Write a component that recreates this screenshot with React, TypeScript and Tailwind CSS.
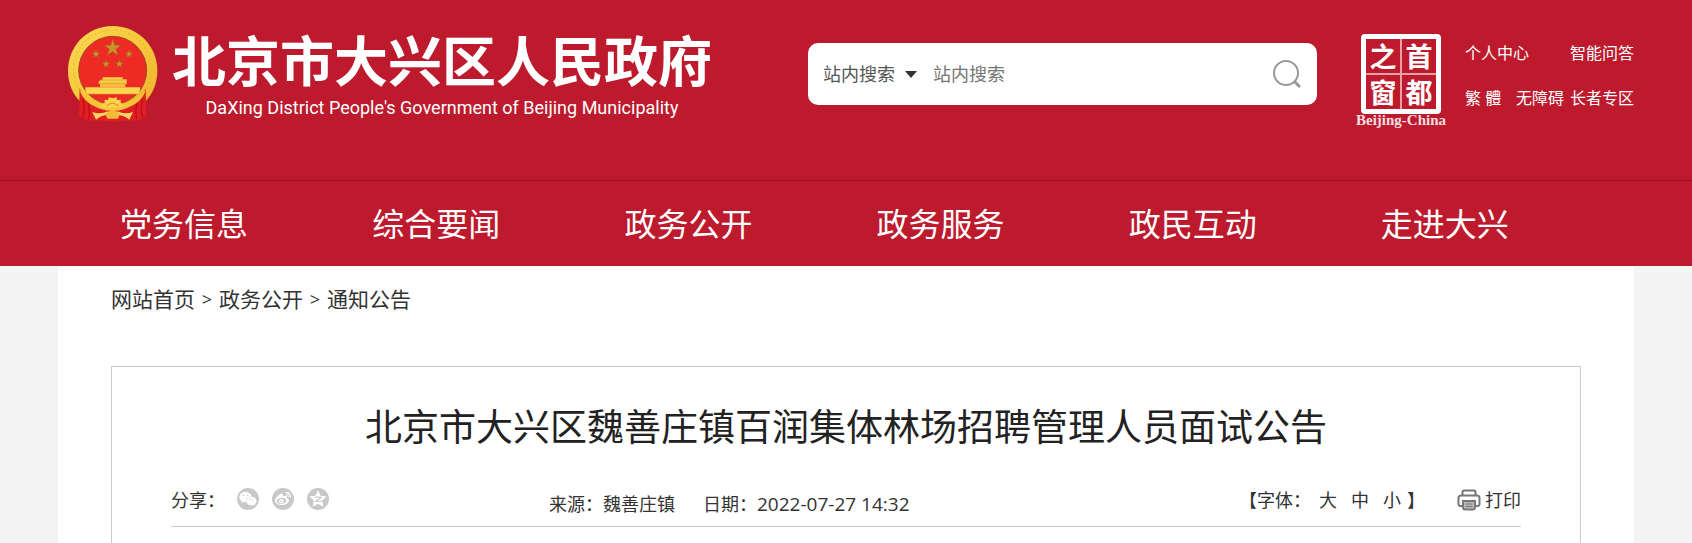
import { useState } from "react";
import { FaWeibo, FaWeixin } from "react-icons/fa6";

const navItems = ["党务信息", "综合要闻", "政务公开", "政务服务", "政民互动", "走进大兴"];
const crumbs = ["网站首页", "政务公开", "通知公告"];
const fontSizes = ["大", "中", "小"];

function Star({ x, y, r }: { x: number; y: number; r: number }) {
  const points = Array.from({ length: 10 }, (_, i) => {
    const radius = i % 2 === 0 ? r : r * 0.38;
    const angle = (Math.PI / 5) * i - Math.PI / 2;
    return `${(x + radius * Math.cos(angle)).toFixed(1)},${(y + radius * Math.sin(angle)).toFixed(1)}`;
  }).join(" ");

  return <polygon points={points} fill="#c9952a" stroke="#a5621d" strokeWidth="1.5" />;
}

function Emblem() {
  return (
    <svg viewBox="24 18 270 288" className="h-24 w-[90px] shrink-0" aria-hidden="true">
      <defs>
        <linearGradient id="gold" x1="0" y1="0" x2="1" y2="1">
          <stop offset="0" stopColor="#f8d955" />
          <stop offset="0.5" stopColor="#f7c93a" />
          <stop offset="1" stopColor="#eeb02e" />
        </linearGradient>
      </defs>
      {/* wheat ring */}
      <path
        d="M158 18 C234 18 292 78 292 152 C292 190 278 222 256 244 C228 268 190 274 158 274 C126 274 88 268 60 244 C38 222 24 190 24 152 C24 78 82 18 158 18 Z"
        fill="url(#gold)"
      />
      <circle cx="158" cy="147" r="117" fill="none" stroke="#e9b235" strokeWidth="5" strokeDasharray="7 6" opacity="0.5" />
      {/* drapery */}
      <path
        d="M59 204 Q72 246 120 262 Q140 269 158 269 Q176 269 196 262 Q244 246 257 204 L259 286 Q242 306 208 301 L158 305 L108 301 Q74 306 57 286 Z"
        fill="#df1f22"
      />
      <path
        d="M68 236 Q76 262 68 292 M84 250 Q92 272 86 298 M248 236 Q240 262 248 292 M232 250 Q224 272 230 298"
        fill="none"
        stroke="#b90f1c"
        strokeWidth="4"
      />
      <circle cx="158" cy="151" r="102" fill="#ee2a24" stroke="#9d4c20" strokeWidth="3" />
      <Star x={158} y={84} r={27} />
      <Star x={108} y={102} r={13} />
      <Star x={207} y={102} r={13} />
      <Star x={138} y={132} r={13} />
      <Star x={178} y={132} r={13} />
      {/* gate tower */}
      <path d="M128 172 H188 V178 H200 V192 H116 V184 L128 178 Z" fill="#f9cf48" />
      <path d="M122 180 H194 M118 190 H198" stroke="#d98f28" strokeWidth="2" />
      <path d="M120 192 H196 V201 H120 Z" fill="#f5bd3c" />
      <path d="M76 202 H240 V210 L235 222 H82 L76 210 Z" fill="#fbd650" />
      <path d="M82 222 H235" stroke="#e0a12e" strokeWidth="2" />
      {/* cog wheel and sheaves */}
      <path d="M58 208 Q92 254 158 258 Q224 254 258 208 Q246 250 196 266 Q158 280 120 266 Q70 250 58 208 Z" fill="#f5c238" />
      <path d="M122 256 L134 248 L134 239 L144 240 L147 232 L158 235 L169 232 L172 240 L182 239 L182 248 L194 256 L180 263 H136 Z" fill="#f9d24a" />
      <path d="M140 258 Q158 242 176 258" fill="none" stroke="#d2862a" strokeWidth="3" />
      <path d="M97 276 Q120 284 144 274 L147 284 Q122 286 108 299 Z" fill="#f9d662" />
      <path d="M219 276 Q196 284 172 274 L169 284 Q194 286 208 299 Z" fill="#f9d662" />
      <path d="M136 282 Q158 260 180 282 L174 296 H142 Z" fill="#f4bb38" />
    </svg>
  );
}

function Seal() {
  return (
    <a href="#" className="flex w-[88px] shrink-0 flex-col items-center text-white">
      <span className="grid size-20 grid-cols-2 grid-rows-2 gap-0.5 rounded-[4px] border-[5px] border-white bg-[#e9a0a7] text-[27px] leading-none font-bold">
        {["之", "首", "窗", "都"].map((char) => (
          <span key={char} className="flex items-center justify-center bg-[#bd1a2d]">
            {char}
          </span>
        ))}
      </span>
      <span className="font-['Liberation_Serif',serif] text-[15px] leading-3 font-bold whitespace-nowrap text-[#f6dfe1]">
        Beijing-China
      </span>
    </a>
  );
}

function QzoneIcon() {
  return (
    <svg viewBox="0 0 22 22" className="size-[22px]" aria-hidden="true">
      <path
        d="M11 3.2 L13.3 8.2 L18.7 8.8 L14.7 12.5 L15.8 18 L11 15.2 L6.2 18 L7.3 12.5 L3.3 8.8 L8.7 8.2 Z"
        fill="#fff"
        stroke="#fff"
        strokeLinejoin="round"
      />
      <path d="M8 9.4 Q11 8.6 14 9.4 L8.8 13.2 Q12 14 15.6 12.8" fill="none" stroke="#c8c8c8" strokeWidth="1.2" />
    </svg>
  );
}

function PrinterIcon() {
  return (
    <svg viewBox="0 0 24 22" className="h-[22px] w-6" fill="none" stroke="#777" aria-hidden="true">
      <path d="M5.5 6 V3 Q5.5 1.5 7 1.5 H17 Q18.5 1.5 18.5 3 V6" strokeWidth="2" />
      <path
        d="M5 17 H3.5 Q1.5 17 1.5 15 V9 Q1.5 6.5 4 6.5 H20 Q22.5 6.5 22.5 9 V15 Q22.5 17 20.5 17 H19"
        strokeWidth="2"
      />
      <path d="M6 12 H18 V18 Q18 20.5 16 20.5 H8 Q6 20.5 6 18 Z" fill="#bbb" strokeWidth="2" />
      <path d="M8.5 15 H15.5 M8.5 17.5 H15.5" strokeWidth="1" />
    </svg>
  );
}

export default function App() {
  const [keyword, setKeyword] = useState("");
  const [scope, setScope] = useState("site");

  return (
    <div className="min-h-screen bg-[#f4f4f4] font-['Open_Sans','Noto_Sans_CJK_SC',sans-serif] text-[#333]">
      <header className="bg-[#bd1a2d] text-white">
        <div className="mx-auto flex h-45 max-w-[1576px] items-start">
          <a href="#" className="flex shrink-0 gap-3.5 pt-[26px] pl-2.5">
            <Emblem />
            <span className="flex flex-col items-center">
              <span className="text-[54px] leading-[70px] font-bold">北京市大兴区人民政府</span>
              <span className="font-[Roboto,sans-serif] text-[18px] leading-6">
                DaXing District People's Government of Beijing Municipality
              </span>
            </span>
          </a>

          <form
            className="mt-[43px] ml-24 flex h-[62px] flex-1 items-center rounded-[10px] bg-white pr-4 pl-[15px] text-[18px]"
            onSubmit={(e) => e.preventDefault()}
          >
            <label className="flex shrink-0 items-center gap-2">
              <select
                aria-label="搜索范围"
                value={scope}
                onChange={(e) => setScope(e.target.value)}
                className="w-[74px] appearance-none text-[#555] outline-none"
              >
                <option value="site">站内搜索</option>
              </select>
              <svg viewBox="0 0 12 7" className="h-[7px] w-3" aria-hidden="true">
                <path d="M0 0 H12 L6 7 Z" fill="#333" />
              </svg>
            </label>
            <input
              type="text"
              aria-label="站内搜索"
              placeholder="站内搜索"
              value={keyword}
              onChange={(e) => setKeyword(e.target.value)}
              className="ml-4 min-w-0 flex-1 text-[#333] outline-none placeholder:text-[#757575]"
            />
            <button type="submit" aria-label="搜索">
              <svg viewBox="0 0 28 28" className="size-7" fill="none" stroke="#999" strokeWidth="2" aria-hidden="true">
                <circle cx="13" cy="13" r="12" />
                <path d="M21.5 21.5 L27 27" strokeWidth="3" />
              </svg>
            </button>
          </form>

          <div className="mt-[34px] ml-10">
            <Seal />
          </div>

          <div className="mt-[41px] ml-5 grid w-[169px] shrink-0 gap-[21px] text-[16px] leading-6 whitespace-nowrap">
            <div className="flex justify-between">
              <a href="#">个人中心</a>
              <a href="#">智能问答</a>
            </div>
            <div className="flex justify-between">
              <a href="#">繁 體</a>
              <span className="flex gap-1.5">
                <a href="#">无障碍</a>
                <a href="#">长者专区</a>
              </span>
            </div>
          </div>
        </div>

        <nav className="border-t border-[#941521]">
          <ul className="mx-auto flex h-[85px] max-w-[1576px] items-center">
            {navItems.map((item) => (
              <li key={item} className="w-[16%] text-center text-[32px]">
                <a href="#">{item}</a>
              </li>
            ))}
          </ul>
        </nav>
      </header>

      <main className="mx-auto max-w-[1576px] bg-white px-[53px] pt-[15px]">
        <div className="flex items-center gap-1.5 text-[21px] leading-9">
          {crumbs.map((crumb, index) => (
            <span key={crumb} className="flex items-center gap-1.5">
              {index > 0 && <span className="w-3 text-center text-[18px]">&gt;</span>}
              <a href="#">{crumb}</a>
            </span>
          ))}
        </div>

        <article className="mt-[49px] min-h-[177px] border border-b-0 border-[#ccc] px-[59px] pt-[33px]">
          <h1 className="text-center text-[37px] leading-[54px] text-[#222]">
            北京市大兴区魏善庄镇百润集体林场招聘管理人员面试公告
          </h1>

          <div className="mt-8 flex h-[41px] border-b border-[#ccc] text-[18px] leading-7 whitespace-nowrap">
            <div className="flex w-[28%] items-start">
              <span>分享：</span>
              <div className="ml-3 flex gap-[13px] pt-0.5">
                <a href="#" aria-label="微信" className="flex size-[22px] items-center justify-center rounded-full bg-[#c8c8c8] text-white">
                  <FaWeixin className="size-[18px]" />
                </a>
                <a href="#" aria-label="微博" className="flex size-[22px] items-center justify-center rounded-full bg-[#c8c8c8] text-white">
                  <FaWeibo className="size-4" />
                </a>
                <a href="#" aria-label="QQ空间" className="flex size-[22px] items-center justify-center rounded-full bg-[#c8c8c8]">
                  <QzoneIcon />
                </a>
              </div>
            </div>

            <div className="flex gap-7 pt-1">
              <span>来源：魏善庄镇</span>
              <span>
                日期：<span className="text-[19px]">2022-07-27 14:32</span>
              </span>
            </div>

            <div className="ml-auto flex items-start">
              <span>【字体：</span>
              <span className="ml-2 flex gap-3.5">
                {fontSizes.map((size) => (
                  <button key={size} type="button">
                    {size}
                  </button>
                ))}
              </span>
              <span className="ml-1.5">】</span>
              <button type="button" className="ml-8 flex items-center gap-1">
                <PrinterIcon />
                打印
              </button>
            </div>
          </div>
        </article>
      </main>
    </div>
  );
}
